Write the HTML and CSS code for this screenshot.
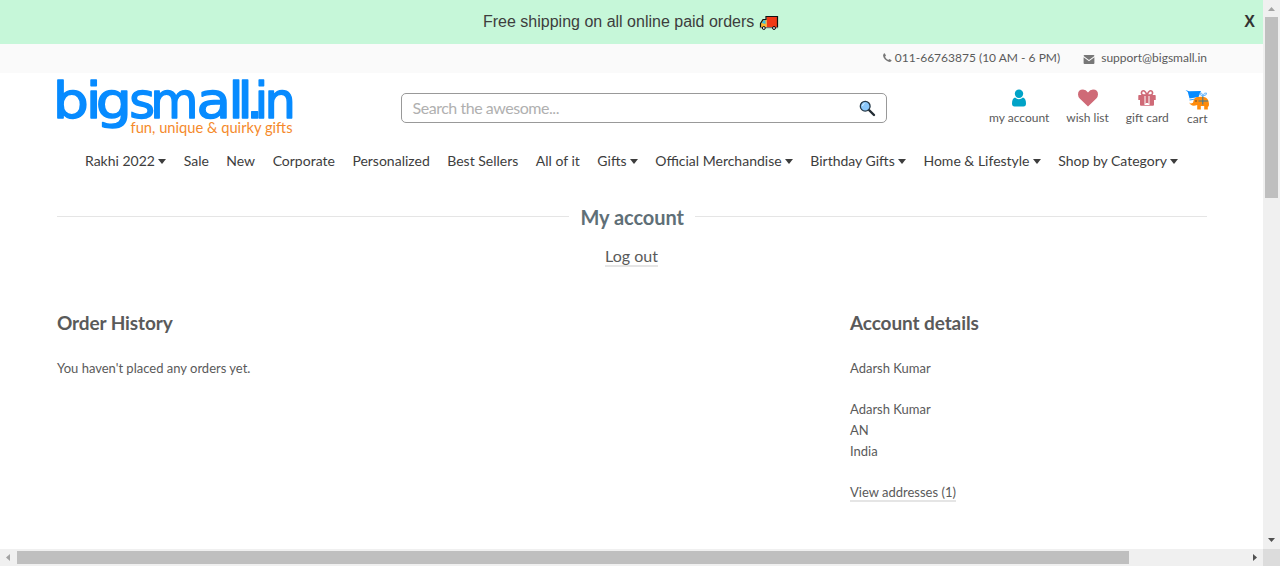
FILE: index.html
```html
<!DOCTYPE html>
<html lang="en">
<head>
<meta charset="utf-8">
<title>My account</title>
<link rel="stylesheet" href="styles.css">
</head>
<body>
<div class="window">
<div class="page">
  <div class="promo">
    <span class="promo-text">Free shipping on all online paid orders</span>
    <svg class="truck" width="20" height="16" viewBox="0 0 20 16"><path d="M7.500 1.500H18.500v11H7.500z" fill="#f03a17"/><path d="M1.500 13V8.500l2.500-4h3.500V13z" fill="#ffb92e"/><path d="M2.700 8l1.800-2.700h2V9z" fill="#35bfe8"/><path d="M1.500 13V8.500l2.500-4h3v-3h11.500v11" fill="none" stroke="#111" stroke-width="1.200"/><path d="M1 12.600h18" stroke="#777" stroke-width="1.200"/><circle cx="4.800" cy="13" r="1.500" fill="#ddd" stroke="#111"/><circle cx="15" cy="13" r="1.500" fill="#ddd" stroke="#111"/></svg>
    <button class="close">X</button>
  </div>
  <div class="contact">
    <svg width="9" height="9" viewBox="0 0 10 10"><path d="M2 .4L3.300 3 2.200 4.200Q3.500 6.700 5.800 7.800L7 6.700l2.600 1.400Q9.500 10 7 10 4.500 9.600 2 7-.2 4.400.1 2.400.5.500 2 .4z" fill="#777"/></svg>
    <span class="phone">011-66763875 (10 AM - 6 PM)</span>
    <svg class="mail" width="12" height="9" viewBox="0 0 12 10"><path d="M1 0h10q1 0 1 1L6 5.500 0 1.200Q0 0 1 0zM0 2.600L6 7l6-4.400V9q0 1-1 1H1Q0 10 0 9z" fill="#777"/></svg>
    <span class="email">support@bigsmall.in</span>
  </div>
  <header class="header">
    <svg class="logo" width="240" height="66" viewBox="0 0 240 66"><g class="logo-name"><text transform="scale(1.150 1)" y="40.500" x="-2.800 25.900 34.600">big</text><text y="40.500" x="73.200 94.300">sm</text><text transform="scale(1.140 1)" y="40.500" x="123.300 151.200 159.100 166.500">all.</text><text y="40.500" x="198.500 208.500">in</text></g><text class="logo-tag" x="74.500" y="56" textLength="162" lengthAdjust="spacingAndGlyphs">fun, unique &amp; quirky gifts</text></svg>
    <div class="search"><span>Search the awesome...</span>
      <svg width="17" height="17" viewBox="0 0 17 17"><path d="M10 10l5 5" stroke="#222b33" stroke-width="2.400" stroke-linecap="round"/><circle cx="6.200" cy="6.200" r="4.900" fill="#8bc8fb" stroke="#263846" stroke-width="1.300"/><path d="M3.500 6q.2-2 2-2.500" stroke="#e4f5ff" fill="none"/></svg>
    </div>
    <div class="tools">
      <a class="tool account"><svg width="14" height="18" viewBox="0 0 14 18"><circle cx="7" cy="4.700" r="4.200" fill="#00a3c7"/><path d="M3 8.500Q7 12 11 8.500q3 1 3 6 0 3-2.500 3h-9Q0 17.500 0 14.500q0-5 3-6z" fill="#00a3c7"/></svg><span>my account</span></a>
      <a class="tool wish"><svg width="20" height="18" viewBox="0 0 20 18"><path d="M10 17.500L1.700 9.500Q0 7.500 0 5.500 0 .5 5 .5q3 0 5 3 2-3 5-3 5 0 5 5 0 2-1.700 4z" fill="#cf6a77"/></svg><span>wish list</span></a>
      <a class="tool gift"><svg width="18" height="18" viewBox="0 0 18 18"><path d="M1 6h16q.7 0 .7.700V11H.3V6.700Q.3 6 1 6zM2 11h14v4.700q0 1-1 1H3q-1 0-1-1z" fill="#cf6a77"/><path d="M6.500 7h1v8h3V7h1v9h-5z" fill="#fff"/><path d="M7.500 14h3v1.300h-3z" fill="#fff"/><path d="M9 6H5.500C2.500 6 3 1.700 5.500 1.700 7.300 1.700 8 4 9 6c1-2 1.700-4.300 3.500-4.300C15 1.700 15.500 6 12.500 6z" fill="none" stroke="#cf6a77" stroke-width="1.600"/></svg><span>gift card</span></a>
      <a class="tool cart"><svg width="25" height="22" viewBox="0 0 25 22"><path d="M.5 1l3.500 1.200 12-.2-2.500 6-9 1.500L2.800 3z" fill="#078bff"/><path d="M4.500 11l6-1" stroke="#3ea4ff" stroke-width="1.200"/><path d="M4 13q1 2.500 4 .7 1-5.700 5-5.700 9-1.500 10.500 4 .8 3 .3 5l-1 1v2.500h-3.600V17h-3.400v3.500h-3.600V16q-6 2.500-8.200-3z" fill="#ff8b0b"/><path d="M17.800 7v8.500M13.500 12h9.500" stroke="#2878a8" stroke-width=".9"/><path d="M18 7q-4-1-3-3 2-1 3 3 1-4 3.500-3 1 2-3.500 3z" fill="#fff" stroke="#65b6ff"/><circle cx="11" cy="12" r=".7" fill="#333"/></svg><span>cart</span></a>
    </div>
  </header>
  <nav class="nav">
    <a class="drop">Rakhi 2022</a><a>Sale</a><a>New</a><a>Corporate</a><a>Personalized</a><a>Best Sellers</a><a>All of it</a><a class="drop">Gifts</a><a class="drop">Official Merchandise</a><a class="drop">Birthday Gifts</a><a class="drop">Home &amp; Lifestyle</a><a class="drop">Shop by Category</a>
  </nav>
  <main class="main">
    <div class="title"><h1>My account</h1></div>
    <div class="logout"><a>Log out</a></div>
    <div class="columns">
      <section class="orders"><h2>Order History</h2><p>You haven't placed any orders yet.</p></section>
      <section class="details"><h2>Account details</h2><p>Adarsh Kumar</p><p>Adarsh Kumar<br>AN<br>India</p><p><a>View addresses (1)</a></p></section>
    </div>
  </main>
</div>
<div class="vbar"><svg width="17" height="17"><path d="M5 11h7L8.500 7z" fill="#a3a3a3"/></svg><i class="vthumb"></i><svg class="end" width="17" height="17"><path d="M5 6h7l-3.500 4z" fill="#505050"/></svg></div>
<div class="hbar"><svg width="17" height="17"><path d="M10 5v7L6 8.500z" fill="#a3a3a3"/></svg><i class="hthumb"></i><svg class="end" width="17" height="17"><path d="M7 5v7l4-3.500z" fill="#505050"/></svg></div>
<div class="corner"></div>
</div>
</body>
</html>
```
FILE: styles.css
```css
* { box-sizing: border-box; }
body { margin: 0; font-family: Lato, sans-serif; color: #5a5a5a; background: #fff; overflow: hidden; }
svg { display: block; flex: none; }
.window { display: grid; grid-template: 549px 17px / 1263px 17px; width: 1280px; height: 566px; }
.page { overflow: hidden; }
.promo { height: 44px; background: #c6f7d9; display: flex; align-items: center; padding: 0 8px 0 483px; font: 16px/20px "Liberation Sans", sans-serif; color: #3d3d3d; }
.promo-text { white-space: nowrap; }
.truck { margin: 2px 0 0 5px; }
.close { margin-left: auto; border: 0; padding: 0; background: none; font: bold 16px "Liberation Sans", sans-serif; color: #333; }
.contact { height: 29px; background: #fafafa; display: flex; align-items: center; justify-content: flex-end; padding: 0 56px 2px 0; font-size: 12px; white-space: nowrap; }
.phone { margin-left: 3px; }
.mail { margin: 4px 6px 0 23px; }
.header { height: 66px; display: flex; align-items: flex-start; padding-left: 56px; }
.logo { margin-top: 4px; overflow: visible; }
.logo-name { font: 49.5px "DejaVu Sans", sans-serif; fill: #078bff; stroke: #078bff; stroke-width: 1.4; stroke-linejoin: round; }
.logo-tag { font: 16px Lato, sans-serif; fill: #f58a2c; }
.search { width: 486px; height: 30px; margin: 20px 0 0 105px; border: 1px solid #999; border-radius: 5px; display: flex; justify-content: space-between; align-items: center; padding: 0 10px 0 10.5px; color: #b0b0b0; font-size: 16px; }
.search span { padding-bottom: 2px; letter-spacing: -.46px; }
.tools { display: flex; margin: 16px 0 0 102px; gap: 17px; font-size: 12px; white-space: nowrap; }
.tool { display: flex; flex-direction: column; align-items: center; }
.tool svg { height: 18px; }
.tool span { line-height: 16px; margin-top: 3px; }
.tools .cart svg { height: 22px; }
.tools .cart span { margin-top: 0; }
.cart { margin-left: -1px; }
.nav { height: 42px; display: flex; align-items: center; padding: 0 0 0 85px; gap: 17.5px; color: #3d3d3d; font-size: 14px; white-space: nowrap; }
.drop::after { content: ""; display: inline-block; border: 4px solid transparent; border-top: 5px solid #3d3d3d; border-bottom: 0; margin-left: 3.2px; vertical-align: 2px; }
.main { padding: 24px 56px 0 57px; }
.title { display: flex; align-items: center; height: 24px; margin-right: 1px; }
.title::before, .title::after { content: ""; height: 1px; flex: 1; background: #e5e5e5; margin-bottom: 2px; }
.title::after { margin-right: -1px; }
h1 { margin: 0 10.500px 0 11px; font-size: 20px; line-height: 24px; color: #5f6f77; letter-spacing: -.05px; }
.logout { height: 54px; text-align: center; font-size: 16px; line-height: 20px; padding: 17px 1px 0 0; }
.logout a { display: inline-block; height: 21px; border-bottom: 2px solid #e5e5e5; }
.columns { display: grid; grid-template-columns: 793px 1fr; padding-top: 28px; font-size: 13px; }
h2 { margin: 0 0 23px; font-size: 19px; line-height: 24px; letter-spacing: -.1px; }
p { margin: 0 0 20px; line-height: 21px; }
p a { display: inline-block; line-height: 16px; border-bottom: 2px solid #e5e5e5; }
.vbar, .hbar { display: flex; background: #f0f0f0; }
.vbar { flex-direction: column; }
.vthumb { width: 13px; height: 181px; margin-left: 2px; background: #bfbfbf; }
.hthumb { width: 1112px; height: 13px; margin-top: 2px; background: #bfbfbf; }
.vbar .end { margin-top: auto; }
.hbar .end { margin-left: auto; }
.corner { background: #dcdcdc; }
```
